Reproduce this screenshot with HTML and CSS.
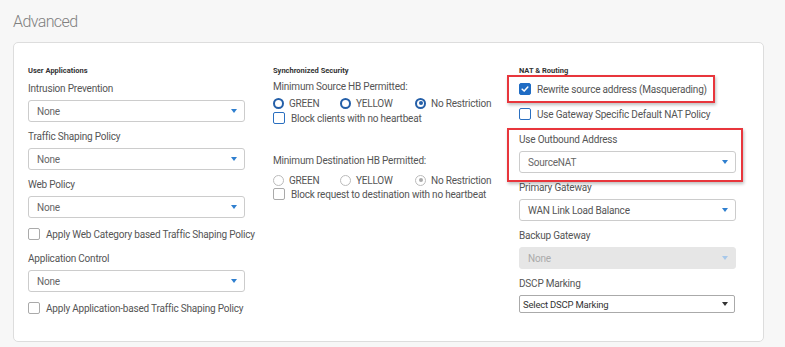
FILE: index.html
```html
<!DOCTYPE html>
<html lang="en">
<head>
    <meta charset="UTF-8">
    <title>Advanced</title>
    <link rel="stylesheet" href="styles.css">
</head>
<body>
    <h2 class="page-title">Advanced</h2>

    <div class="panel">
        <!-- User Applications -->
        <div class="col">
            <div class="section-title">User Applications</div>

            <div class="field-label">Intrusion Prevention</div>
            <div class="select"><span>None</span><i class="caret"></i></div>

            <div class="field-label">Traffic Shaping Policy</div>
            <div class="select"><span>None</span><i class="caret"></i></div>

            <div class="field-label">Web Policy</div>
            <div class="select"><span>None</span><i class="caret"></i></div>

            <label class="check-row">
                <span class="box"></span>
                Apply Web Category based Traffic Shaping Policy
            </label>

            <div class="field-label after-check">Application Control</div>
            <div class="select"><span>None</span><i class="caret"></i></div>

            <label class="check-row">
                <span class="box"></span>
                Apply Application-based Traffic Shaping Policy
            </label>
        </div>

        <!-- Synchronized Security -->
        <div class="col col-mid">
            <div class="section-title">Synchronized Security</div>

            <div class="hb-label">Minimum Source HB Permitted:</div>
            <div class="radio-row">
                <label class="radio"><span class="dot"></span>GREEN</label>
                <label class="radio"><span class="dot"></span>YELLOW</label>
                <label class="radio"><span class="dot on"></span>No Restriction</label>
            </div>
            <label class="check-row hb-check">
                <span class="box blue"></span>
                Block clients with no heartbeat
            </label>

            <div class="hb-label second">Minimum Destination HB Permitted:</div>
            <div class="radio-row muted">
                <label class="radio"><span class="dot"></span>GREEN</label>
                <label class="radio"><span class="dot"></span>YELLOW</label>
                <label class="radio"><span class="dot on"></span>No Restriction</label>
            </div>
            <label class="check-row">
                <span class="box"></span>
                Block request to destination with no heartbeat
            </label>
        </div>

        <!-- NAT & Routing -->
        <div class="col col-nat">
            <div class="section-title">NAT &amp; Routing</div>

            <label class="check-row first-nat marked marked-rewrite">
                <span class="box checked">
                    <svg viewBox="0 0 12 12" width="12" height="12"><path d="M2.6 6.2 L5 8.5 L9.4 3.6" fill="none" stroke="#fff" stroke-width="1.8" stroke-linecap="round" stroke-linejoin="round"/></svg>
                </span>
                Rewrite source address (Masquerading)
            </label>
            <label class="check-row nat-row">
                <span class="box blue"></span>
                Use Gateway Specific Default NAT Policy
            </label>

            <div class="marked marked-outbound">
                <div class="field-label">Use Outbound Address</div>
                <div class="select"><span>SourceNAT</span><i class="caret"></i></div>
            </div>

            <div class="field-label">Primary Gateway</div>
            <div class="select"><span class="dark">WAN Link Load Balance</span><i class="caret"></i></div>

            <div class="field-label">Backup Gateway</div>
            <div class="select disabled"><span>None</span><i class="caret"></i></div>

            <div class="field-label">DSCP Marking</div>
            <div class="native-select"><span>Select DSCP Marking</span><i class="caret black"></i></div>
        </div>
    </div>
</body>
</html>
```

FILE: styles.css
```css
body {
    margin: 0;
    background: #f7f7f7;
    font-family: Roboto, "Liberation Sans", sans-serif;
    color: #4a4a4a;
}
.page-title {
    margin: 0;
    padding: 12px 13px 0;
    height: 30px;
    font-size: 16px;
    line-height: 20px;
    font-weight: 300;
    letter-spacing: -0.6px;
    color: #808080;
}
.panel {
    margin-left: 13px;
    width: 735px;
    height: 276px;
    padding: 22px 0 0 14px;
    background: #fff;
    border: 1px solid #ddd;
    border-radius: 5px;
    display: grid;
    grid-template-columns: 245px 246px 218px;
    align-content: start;
}
.col {
    display: flex;
    flex-direction: column;
    align-items: flex-start;
    letter-spacing: -0.2px;
}
.section-title {
    font-size: 7.5px;
    font-weight: bold;
    line-height: 12px;
    letter-spacing: 0;
    color: #333;
    margin-bottom: 6px;
}
.field-label {
    font-size: 10px;
    line-height: 12px;
    color: #555;
    margin-bottom: 5px;
    white-space: nowrap;
}
.select {
    box-sizing: border-box;
    width: 217px;
    height: 22px;
    border: 1px solid #ccc;
    border-radius: 3px;
    background: #fff;
    display: flex;
    align-items: center;
    justify-content: space-between;
    padding: 0 7px 0 8px;
    font-size: 10px;
    color: #666;
    margin-bottom: 9px;
}
.select .dark { color: #555; }
.caret {
    width: 0;
    height: 0;
    border-left: 3.5px solid transparent;
    border-right: 3.5px solid transparent;
    border-top: 4px solid #2f7fcf;
}
.caret.black { border-top-color: #333; border-left-width: 3px; border-right-width: 3px; }
.select.disabled {
    background: #e6e6e6;
    border-color: #e6e6e6;
    color: #aaa;
}
.select.disabled .caret { border-top-color: #a7c8ea; }
.native-select {
    box-sizing: border-box;
    width: 216px;
    height: 18px;
    border: 1px solid #aaa;
    border-radius: 2px;
    display: flex;
    align-items: center;
    justify-content: space-between;
    padding: 0 6px 0 3px;
    font-size: 9.5px;
    color: #333;
}
.check-row {
    display: flex;
    align-items: center;
    gap: 6px;
    height: 14px;
    font-size: 10px;
    color: #555;
    white-space: nowrap;
}
.after-check { margin-top: 12px; }
.box {
    box-sizing: border-box;
    flex: none;
    width: 12px;
    height: 12px;
    border: 1px solid #aaa;
    border-radius: 2px;
    background: #fff;
    display: flex;
    align-items: center;
    justify-content: center;
}
.box.blue { border: 1.5px solid #2a6fc0; }
.box.checked { background: #1f6cc4; border-color: #1f6cc4; }
.box svg { display: block; }
.hb-label {
    font-size: 10px;
    line-height: 12px;
    color: #555;
    margin-top: -2px;
    margin-bottom: 3px;
    white-space: nowrap;
}
.hb-label.second { margin-top: 30px; margin-bottom: 6px; }
.hb-check { margin-top: 1px; }
.radio-row {
    display: flex;
    height: 14px;
    align-items: center;
    font-size: 10px;
    color: #555;
    white-space: nowrap;
}
.radio {
    display: flex;
    align-items: center;
    gap: 5px;
    width: 67px;
}
.radio:nth-child(2) { width: 75px; }
.dot {
    box-sizing: border-box;
    flex: none;
    width: 11px;
    height: 11px;
    border: 2px solid #245fa8;
    border-radius: 50%;
    display: flex;
    align-items: center;
    justify-content: center;
}
.dot.on::after {
    content: "";
    width: 4px;
    height: 4px;
    border-radius: 50%;
    background: #245fa8;
}
.muted .dot { border: 1px solid #bbb; }
.muted .dot.on::after { background: #aaa; }
.first-nat { margin-top: -1px; margin-bottom: 11px; }
.nat-row { margin-bottom: 13px; }
.marked { position: relative; }
.marked::after {
    content: "";
    position: absolute;
    border: 2px solid #e8363c;
    box-shadow: 1px 2px 3px rgba(0,0,0,0.25);
    pointer-events: none;
}
.marked-rewrite::after { left: -12px; top: -7px; width: 204px; height: 24px; }
.marked-outbound::after { left: -12px; top: -6px; width: 232px; height: 50px; }
```
